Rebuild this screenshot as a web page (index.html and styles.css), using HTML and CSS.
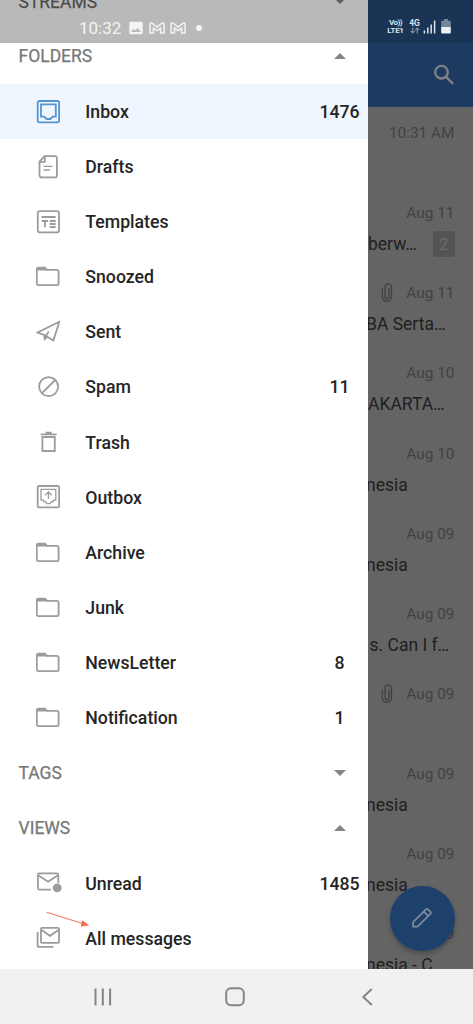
FILE: index.html
```html
<!DOCTYPE html>
<html lang="en">
<head>
<meta charset="utf-8">
<title>Mail folders</title>
<link rel="stylesheet" href="styles.css">
</head>
<body>
<svg class="defs" aria-hidden="true">
  <symbol id="inbox" viewBox="0 0 24 24"><rect x="1.7" y="1" width="21.4" height="21.4" rx="1.8"/><path d="M5 4.3h14.8v12.4h-3.2L14.3 19h-3.8l-2.3-2.3H5z"/></symbol>
  <symbol id="drafts" viewBox="0 0 24 24"><path d="M8.6 1.2h10.3a2 2 0 0 1 2 2v17.2a2 2 0 0 1-2 2H5.5a2 2 0 0 1-2-2V6.6zM8.8 1.6v5.2H3.8"/><path class="thin" d="M7.6 11.3h9M7.6 15h6.2"/></symbol>
  <symbol id="templates" viewBox="0 0 24 24"><rect x="1.8" y="1.2" width="21.2" height="21.2" rx="2.2"/><path d="M5.5 7h14.2M5.8 11h6.2M8.9 11v6.3M13.7 11h6M13.7 14h6M13.7 17h6"/></symbol>
  <symbol id="folder" viewBox="0 0 24 24"><path d="M.8 5V4.2a1.5 1.5 0 0 1 1.5-1.5H9l2 2.2h10a1.6 1.6 0 0 1 1.6 1.6v12a1.6 1.6 0 0 1-1.6 1.6H2.4a1.6 1.6 0 0 1-1.6-1.6z"/><path class="solid" d="M.3 5.4V3.2l1.6-1.2h7.4l2.2 3.4z"/></symbol>
  <symbol id="sent" viewBox="0 0 24 24"><path d="M23.3 1.7 1.6 12.5l6.6 2.3 9.2 5.7zM8.2 14.8l.4 4.4 3-2.5M8.5 18.6l4.3-7.2"/></symbol>
  <symbol id="spam" viewBox="0 0 24 24"><circle cx="12.6" cy="11.6" r="9.5"/><path d="m6 18.2 13.2-13.2"/></symbol>
  <symbol id="trash" viewBox="0 0 24 24"><path d="M4.6 4.3h16M9.6 2.6h6M6.4 7h12.4v14H6.4z"/></symbol>
  <symbol id="outbox" viewBox="0 0 24 24"><rect x="1.7" y="1" width="21.4" height="21.4" rx="1.4"/><path class="thin" d="M5 4.3h14.8v10.8h-2.6v1.5h-2l-1.2 2h-3.2l-1.2-2h-2v-1.5H5zM12.4 14V7.3M8.9 10.4l3.5-3.4 3.5 3.4"/></symbol>
  <symbol id="unread" viewBox="0 0 26 24"><path d="M22.3 12V3.9A1.5 1.5 0 0 0 20.8 2.4H3.4a1.5 1.5 0 0 0-1.5 1.5v13.2a1.5 1.5 0 0 0 1.5 1.5h11.4M2.6 4.4l9.5 6.3 9.4-6.3"/><circle class="solid" cx="21.2" cy="16.9" r="4.4"/></symbol>
  <symbol id="all" viewBox="0 0 24 24"><rect x="5" y="1.9" width="18" height="14.9" rx="1"/><path d="m5.6 4 8.4 5.8L22.5 4M1.6 5.8v14a1 1 0 0 0 1 1h14.7"/></symbol>
  <symbol id="clip" viewBox="0 0 12 20"><path d="M8 5.5v8.3a2 2 0 0 1-4 0V5.6M4 13V4.2a3 3 0 0 1 6.5 0v9.5a4.6 4.6 0 0 1-9.2 0V5.5"/></symbol>
  <symbol id="gmail" viewBox="0 0 16 12"><path d="M1 11V2.2c0-1.4 1.4-1.5 2.2-.8L8 5l4.8-3.6c.8-.7 2.2-.6 2.2.8V11h-3.4V6.2L8 8.7 4.4 6.2V11z"/></symbol>
</svg>

<div class="phone">
  <main class="app">
    <aside class="drawer">
      <div class="row heading streams"><span class="title">STREAMS</span><span class="end"><i class="down"></i></span></div>
      <div class="row heading"><span class="title">FOLDERS</span><span class="end"><i class="up"></i></span></div>
      <div class="row active"><svg class="icon"><use href="#inbox"/></svg><span class="name">Inbox</span><span class="end">1476</span></div>
      <div class="row"><svg class="icon"><use href="#drafts"/></svg><span class="name">Drafts</span></div>
      <div class="row"><svg class="icon"><use href="#templates"/></svg><span class="name">Templates</span></div>
      <div class="row"><svg class="icon"><use href="#folder"/></svg><span class="name">Snoozed</span></div>
      <div class="row"><svg class="icon"><use href="#sent"/></svg><span class="name">Sent</span></div>
      <div class="row"><svg class="icon"><use href="#spam"/></svg><span class="name">Spam</span><span class="end">11</span></div>
      <div class="row"><svg class="icon"><use href="#trash"/></svg><span class="name">Trash</span></div>
      <div class="row"><svg class="icon"><use href="#outbox"/></svg><span class="name">Outbox</span></div>
      <div class="row"><svg class="icon"><use href="#folder"/></svg><span class="name">Archive</span></div>
      <div class="row"><svg class="icon"><use href="#folder"/></svg><span class="name">Junk</span></div>
      <div class="row"><svg class="icon"><use href="#folder"/></svg><span class="name">NewsLetter</span><span class="end">8</span></div>
      <div class="row"><svg class="icon"><use href="#folder"/></svg><span class="name">Notification</span><span class="end">1</span></div>
      <div class="row heading"><span class="title">TAGS</span><span class="end"><i class="down"></i></span></div>
      <div class="row heading"><span class="title">VIEWS</span><span class="end"><i class="up"></i></span></div>
      <div class="row"><svg class="icon wide"><use href="#unread"/></svg><span class="name">Unread</span><span class="end">1485</span></div>
      <div class="row"><svg class="icon"><use href="#all"/></svg><span class="name">All messages</span></div>
      <svg class="pointer" viewBox="0 0 46 20"><path d="m1.5 2.3 36 11.2"/><path class="head" d="m37.4 10.3 6.8 5.2-8.5.9z"/></svg>
    </aside>

    <section class="mail">
      <header class="toolbar"><svg class="search" viewBox="0 0 22 22"><circle cx="8.5" cy="8.2" r="6.3"/><path d="m13.1 12.9 7 7"/></svg></header>
      <article class="item"><div class="date">10:31 AM</div></article>
      <article class="item"><div class="date">Aug 11</div><div class="subject">berw…<span class="badge">2</span></div></article>
      <article class="item"><div class="date"><svg class="clip"><use href="#clip"/></svg>Aug 11</div><div class="subject shift">BA Serta…</div></article>
      <article class="item"><div class="date">Aug 10</div><div class="subject">AKARTA…</div></article>
      <article class="item"><div class="date">Aug 10</div><div class="subject shift">nesia</div></article>
      <article class="item"><div class="date">Aug 09</div><div class="subject shift">nesia</div></article>
      <article class="item"><div class="date">Aug 09</div><div class="subject inset">s. Can I f…</div></article>
      <article class="item"><div class="date"><svg class="clip"><use href="#clip"/></svg>Aug 09</div></article>
      <article class="item"><div class="date">Aug 09</div><div class="subject shift">nesia</div></article>
      <article class="item"><div class="date">Aug 09</div><div class="subject shift">nesia</div></article>
      <article class="item"><div class="date">Aug 09</div><div class="subject shift">nesia - C</div></article>
      <button class="compose" aria-label="Compose"><svg viewBox="0 0 24 24"><path d="m2.3 16.6 14-14a1.6 1.6 0 0 1 2.3 0l2.6 2.6a1.6 1.6 0 0 1 0 2.3l-14 14H2.3zM14 5l4.8 4.8"/></svg></button>
    </section>

    <div class="status">
      <div class="status-left">
        <span class="clock">10:32</span>
        <svg class="photo" viewBox="0 0 14 14"><path fill-rule="evenodd" d="M1.5.7h11a1.2 1.2 0 0 1 1.2 1.2v10.2a1.2 1.2 0 0 1-1.2 1.2h-11a1.2 1.2 0 0 1-1.2-1.2V1.9A1.2 1.2 0 0 1 1.5.7zM2 11h10L8.7 6.8 6.2 9.6 4.5 8z"/></svg>
        <svg class="gmail"><use href="#gmail"/></svg>
        <svg class="gmail"><use href="#gmail"/></svg>
        <span class="dot"></span>
      </div>
      <div class="status-right">
        <div class="carrier"><span class="volte">Vo))</span><span>LTE1</span></div>
        <div class="network"><span>4G</span><svg viewBox="0 0 10 7"><path d="M2.7.5v5.4M.8 4l1.9 2 1.9-2M7.2 6.5V1M5.3 3l1.9-2 1.9 2"/></svg></div>
        <svg class="signal" viewBox="0 0 13 14"><path d="M1.4 10.5v3M4.8 7.5v6M8.2 4.5v9M11.6.5v13"/></svg>
        <svg class="battery" viewBox="0 0 10 15"><path class="empty" d="M3 0h4v1.7h1.8a1 1 0 0 1 1 1V8H.2V2.7a1 1 0 0 1 1-1H3z"/><path d="M.2 8h9.6v5.6a1 1 0 0 1-1 1H1.2a1 1 0 0 1-1-1z"/></svg>
      </div>
    </div>
  </main>

  <nav class="navbar">
    <svg class="recents" viewBox="0 0 18 18"><path d="M1.5.5v17M8.8.5v17M16.1.5v17"/></svg>
    <svg class="home" viewBox="0 0 20 20"><rect x="1.2" y="1.2" width="17.6" height="17" rx="5"/></svg>
    <svg class="back" viewBox="0 0 11 18"><path d="M9.8 1 1.3 9l8.5 8"/></svg>
  </nav>
</div>
</body>
</html>
```
FILE: styles.css
```css
* { box-sizing: border-box; }
body { margin: 0; font-family: Roboto, "Liberation Sans", sans-serif; }
svg { display: block; fill: none; overflow: visible; flex: none; }
.defs { position: absolute; width: 0; height: 0; }
.phone { width: 473px; height: 1024px; display: flex; flex-direction: column; overflow: hidden; }
.app { position: relative; height: 968.5px; flex: none; display: flex; overflow: hidden; }

.drawer { position: relative; width: 368px; flex: none; background: #fff; margin-top: -26.3px; }
.row { height: 55.14px; display: flex; align-items: center; padding-left: 36px; color: #252525; font-size: 17.7px; font-weight: 500; }
.active { background: #eff6fe; }
.heading { padding-left: 18.5px; color: #777; font-size: 17.5px; font-weight: 400; -webkit-text-stroke: .25px #777; }
.streams { color: #666; }
.streams .title { margin-top: 2px; }
.icon { width: 24px; height: 24px; stroke: #9c9c9c; stroke-width: 1.8; }
.wide { width: 26px; margin-right: -2px; }
.active .icon { stroke: #5594cf; }
.solid { fill: #9c9c9c; stroke: none; }
.thin { stroke-width: 1.3; }
.name, .end { margin-top: .6px; }
.name { margin-left: 25.3px; }
.end { width: 57px; margin-left: auto; display: flex; justify-content: center; }
.heading .end { width: 56px; margin-top: 0; }
.up, .down { border: 6.5px solid transparent; }
.up { border-top: 0; border-bottom: 6.5px solid #858585; }
.down { border-bottom: 0; border-top: 6.5px solid #858585; }
.pointer { position: absolute; left: 45px; top: 936.3px; width: 46px; height: 20px; stroke: #f57c62; stroke-width: 1.2; }
.head { fill: #f36b50; stroke: none; }

.mail { position: relative; flex: 1; min-width: 0; background: #646464; overflow: hidden; }
.toolbar { height: 107px; padding: 64px 18px 0 0; display: flex; justify-content: flex-end; background: #1d3b61; }
.search { width: 22px; height: 22px; stroke: #7c8186; stroke-width: 2.4; }
.item { height: 80.1px; padding-top: 15.2px; }
.date { height: 22px; padding-right: 18.5px; display: flex; align-items: center; justify-content: flex-end; color: #424242; font-size: 15.4px; white-space: nowrap; }
.clip { width: 12px; height: 20px; margin-right: 13px; stroke: #3f3f3f; stroke-width: 1.2; }
.subject { height: 26px; margin-top: 7px; padding-right: 18.5px; display: flex; align-items: center; justify-content: space-between; color: #202020; font-size: 17.5px; white-space: nowrap; }
.shift { margin-left: -2px; }
.inset { margin-left: 1.5px; }
.badge { width: 21.5px; height: 26px; border-radius: 2px; display: flex; align-items: center; justify-content: center; background: #545454; color: #6d6d6d; font-size: 16px; }
.compose { position: absolute; right: 18.5px; bottom: 18px; width: 64.5px; height: 64.5px; padding: 0; border: 0; border-radius: 50%; display: flex; align-items: center; justify-content: center; background: #1d416c; box-shadow: 0 3px 5px rgba(0, 0, 0, .25); }
.compose svg { width: 22px; height: 22px; stroke: #7e8b9b; stroke-width: 1.9; }

.status { position: absolute; left: 0; top: 0; width: 473px; height: 42.5px; padding: 12px 22.5px 0 79px; display: flex; justify-content: space-between; background: linear-gradient(90deg, rgba(0, 0, 0, .275) 368px, rgba(0, 0, 0, .12) 368px); color: #f4f4f4; }
.status-left, .status-right { height: 31px; display: flex; align-items: center; }
.clock { width: 50px; font-size: 17px; }
.photo { width: 14px; height: 14px; margin-right: 5.5px; fill: #f4f4f4; }
.gmail { width: 16px; height: 12px; margin-right: 5.5px; stroke: #f4f4f4; stroke-width: 1.5; }
.dot { width: 6px; height: 6px; margin-left: 4px; border-radius: 50%; background: #f4f4f4; }
.carrier { width: 22px; display: flex; flex-direction: column; align-items: center; font-size: 8px; line-height: 7.6px; font-weight: 700; letter-spacing: -.3px; color: #dce1e6; }
.volte { letter-spacing: -.6px; }
.network { width: 16px; display: flex; flex-direction: column; align-items: center; font-size: 8.5px; line-height: 8px; font-weight: 700; color: #dce1e6; }
.network svg { width: 10px; height: 7px; stroke: #8191a3; stroke-width: 1.1; }
.signal { width: 13px; height: 14px; stroke: #dce1e6; stroke-width: 1.5; }
.battery { width: 10px; height: 15px; margin-left: 5px; fill: #eef1f4; }
.status-right { margin-top: -1px; }
.empty { fill: #77879a; }

.navbar { flex: 1; padding: 1px 100px 0 94px; display: flex; align-items: center; background: #f1f1f1; stroke: #858585; stroke-width: 2; }
.recents { width: 18px; height: 18px; }
.home { width: 20px; height: 20px; margin-left: 112.5px; }
.back { width: 11px; height: 18px; margin-left: auto; }
```
